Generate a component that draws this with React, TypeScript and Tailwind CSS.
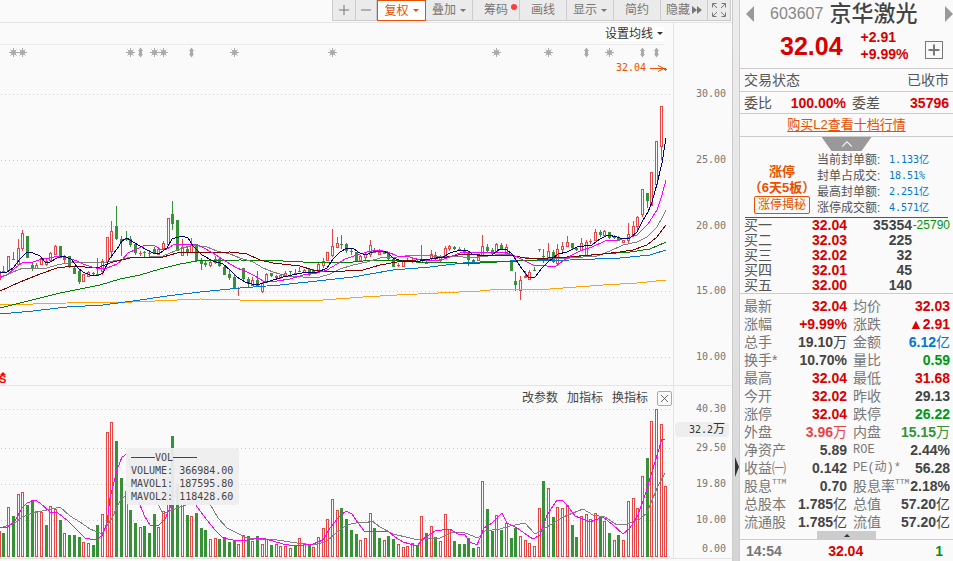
import { useState } from "react";
import type { ReactNode } from "react";
import { ChevronUp, Minus, Plus, X } from "lucide-react";

type Row = { label: ReactNode; value: string; unit?: string; color: string };

const RED = "#e64545";
const GREEN = "#379137";

const TEXT_RED = "text-[#d80000]";
const TEXT_GREEN = "text-[#009614]";
const TEXT_DARK = "text-[#444]";
const TEXT_BLUE = "text-[#0078d2]";

// direction, high, body top, body bottom, low
const CANDLES =
	"r266,271,272,272 r256,256,271,271 g252,259,260,260 r239,248,265,265 r230,233,249,251 g236,236,258,258 g263,265,268,271 r263,265,269,269 r257,258,265,265 r259,261,265,266 " +
	"r252,253,261,262 r245,246,255,255 g246,246,258,258 r255,258,260,263 g256,256,267,268 g266,268,274,274 g270,271,282,284 r274,274,282,282 r271,272,277,277 g272,273,274,276 " +
	"g258,274,275,275 r259,261,272,275 r237,237,262,262 r221,231,252,258 g206,226,239,240 g236,239,242,256 g231,238,240,241 g236,239,245,247 g243,244,253,255 r251,253,254,256 " +
	"g251,252,253,257 g250,253,254,257 g247,249,254,254 r247,249,255,255 r241,243,249,249 r218,218,245,246 g201,214,224,230 g220,220,251,251 r239,247,256,256 g247,249,252,256 " +
	"r238,244,253,253 g244,244,261,261 g258,260,264,270 g261,263,265,267 r261,262,266,267 r256,259,263,264 g258,259,266,267 g266,267,275,275 g270,274,278,280 g275,277,289,289 " +
	"r287,288,289,296 g268,268,279,281 g277,279,284,288 r277,280,286,286 g271,280,286,287 r282,283,292,293 r273,274,283,283 g273,273,276,277 r275,276,278,280 r274,275,278,279 " +
	"r271,273,276,276 g271,271,272,275 g269,273,275,275 g267,271,272,272 r269,270,273,273 g268,269,275,276 g269,270,274,274 r263,264,273,273 r258,261,266,268 r252,252,261,261 " +
	"r229,246,256,257 r237,243,248,248 g235,244,245,249 g243,244,251,253 g249,251,252,255 g252,252,262,262 r255,256,261,261 r253,254,258,260 r240,245,255,257 g248,250,253,253 " +
	"r249,252,255,255 g252,252,254,254 g253,253,259,260 g259,259,267,267 r263,265,266,267 r261,261,267,267 r258,260,262,262 r257,260,261,263 g260,261,263,263 r245,259,263,263 " +
	"g261,262,264,264 r250,254,259,260 g252,255,259,260 r255,256,261,262 r246,248,256,256 r245,246,249,251 g246,247,249,250 r247,249,250,250 g248,251,252,254 g252,253,260,266 " +
	"g259,260,263,263 r254,256,261,261 r235,246,256,256 g244,247,251,252 g248,250,254,256 r243,244,253,253 g243,245,249,250 r244,247,254,256 g260,261,271,271 g272,281,285,291 " +
	"r276,280,291,300 r271,276,278,278 r270,272,280,280 g267,270,271,271 r249,249,250,252 g249,256,257,263 r243,251,260,260 g250,252,262,263 r244,249,264,264 r242,246,250,252 " +
	"r236,242,247,247 g243,243,248,249 g247,248,250,251 r238,243,251,251 r240,242,256,256 r239,241,242,244 r229,232,241,241 g230,232,235,237 r230,231,236,236 g232,232,238,239 " +
	"g235,236,238,239 g236,237,241,241 r240,240,243,243 r223,234,241,243 r221,226,235,235 r216,217,227,230 r189,189,215,217 g193,193,201,208 r172,172,206,206 r141,141,185,185 " +
	"r106,106,147,160 r69,69,69,71";

const VOLUMES =
	"g533 r507 g516 r494 r492 g505 g500 r511 r512 g525 r506 r509 g520 r533 g535 g535 g537 r542 r543 g545 g525 r514 r432 r422 g441 g478 r491 g510 g523 r527 " +
	"g526 g533 g514 r527 r511 r477 g436 g484 r504 g515 r516 g513 g528 g530 r539 r538 g539 g537 g542 g540 r544 r535 g536 r541 g536 r544 r539 g545 r544 r546 " +
	"r546 r548 g545 r538 r543 g544 r547 r537 r528 r519 r499 r510 g508 g519 g530 g534 r540 r538 r513 g528 g538 r540 g536 g539 r544 r547 r546 r543 g545 r516 " +
	"g533 r526 g537 r541 r514 r529 g541 g544 g544 g538 g548 r547 r481 g509 g531 r515 g530 r523 g538 g528 r536 r540 r543 r546 r508 g481 r488 g517 r507 r508 " +
	"r505 g525 g537 r516 r514 r519 r513 g516 r521 g533 r540 g535 r540 r501 r498 r508 r476 g458 r421 r409 r424 r486";

const PRICE_LINES = [
	{ color: "#ffa500", points: "0,305 67,303 133,302 200,299 240,300 323,300 363,297 397,295 480,291 500,289 550,289 603,285 637,283 666,280" },
	{ color: "#0078d2", points: "0,314 33,311 67,307 103,305 133,301 167,296 200,292 240,288 280,285 317,281 353,277 393,270 430,267 463,263 480,262 510,261 570,260 620,258 650,255 666,250" },
	{ color: "#008000", points: "0,308 20,303 40,298 60,293 80,289 100,285 120,279 140,275 160,269 180,264 197,261 240,260 283,261 303,262 353,262 373,260 393,260 417,262 457,263 480,263 497,262 537,260 570,257 603,254 630,252 650,249 666,242" },
	{ color: "#808080", points: "0,278 13,272 23,268 47,268 57,265 73,262 107,262 120,260 130,257 150,257 163,256 170,253 180,249 193,245 207,247 217,251 230,254 240,258 253,262 263,268 273,272 287,276 303,277 320,277 330,274 340,269 353,265 367,262 380,258 397,257 413,255 433,256 463,257 480,257 503,254 520,257 537,259 570,258 597,256 610,251 623,245 637,242 647,237 657,227 662,218 666,210" },
	{ color: "#800000", points: "0,291 20,282 40,274 57,268 73,266 97,268 113,262 130,258 163,257 177,253 230,252 247,254 260,260 273,263 300,266 313,270 327,272 363,270 380,265 403,261 430,259 447,257 463,254 480,255 510,255 530,259 567,257 603,254 620,252 633,250 647,245 657,237 666,225" },
	{ color: "#ff00ff", points: "0,277 7,275 15,268 22,263 33,262 42,259 50,258 58,256 68,258 77,261 83,264 92,267 100,269 107,268 117,264 122,260 128,253 137,249 145,245 155,246 160,249 167,249 173,245 193,244 202,247 213,253 222,259 230,264 237,268 247,272 255,276 263,281 277,281 290,279 303,275 317,273 327,270 337,264 345,259 357,255 367,252 377,250 388,252 397,256 410,257 420,260 437,261 447,258 460,253 490,252 507,253 517,257 525,261 533,265 547,266 555,267 563,261 572,255 580,251 592,247 605,241 617,240 628,238 637,235 648,224 657,210 662,195 666,180" },
	{ color: "#000080", points: "0,273 7,272 13,268 20,259 27,252 33,253 40,256 45,262 50,262 57,258 63,256 71,259 78,268 83,272 90,275 97,276 103,273 110,258 117,249 122,241 127,238 133,242 140,246 147,250 153,253 160,253 167,248 172,239 182,236 188,238 193,246 202,255 213,261 223,264 230,270 237,277 245,282 252,284 260,284 270,281 283,277 297,274 307,272 318,272 327,268 333,259 340,252 347,248 353,248 358,252 365,255 373,252 383,251 388,253 393,258 402,261 410,262 420,261 430,259 443,257 450,253 460,250 467,250 472,254 483,256 492,255 500,249 507,250 512,254 520,266 528,277 535,277 542,268 548,262 558,254 567,252 577,247 592,245 600,239 608,235 617,237 623,239 630,238 637,232 643,220 648,212 652,202 657,184 662,163 666,138" },
];

const VOLUME_LINES = [
	{ color: "#808080", points: "0,528 15,523 22,517 33,513 47,510 60,507 70,516 80,522 90,529 102,534 112,518 120,501 128,493 135,489 150,488 163,514 180,507 197,501 210,504 218,518 227,528 247,538 257,539 277,540 297,543 315,545 327,541 337,532 347,525 360,522 365,523 372,521 380,527 393,534 410,538 418,540 430,538 440,538 453,532 465,533 478,538 485,531 500,529 510,526 525,523 535,534 547,527 563,517 583,509 593,515 605,517 617,525 627,524 640,519 647,513 657,488 665,473" },
	{ color: "#ff00ff", points: "0,528 8,527 15,521 22,508 27,503 35,500 40,503 50,512 58,513 68,521 78,531 85,538 95,540 102,536 107,523 110,498 117,470 122,457 127,454 133,478 140,505 145,517 150,525 158,526 165,519 170,508 177,488 192,487 197,507 207,520 215,530 223,538 233,540 247,540 262,538 273,541 283,544 295,546 313,544 323,540 330,528 338,518 346,511 352,514 358,523 365,532 388,531 395,537 403,542 417,546 423,539 435,531 450,529 458,534 465,535 470,542 477,545 482,533 484,528 492,523 502,513 507,523 517,528 527,535 533,539 540,535 547,515 557,500 562,500 567,505 575,516 590,522 603,517 613,525 623,534 630,528 638,515 645,495 652,472 662,439 665,439" },
];

const SUNS = [13, 22, 130, 154, 163, 234, 332, 496, 548, 609];
const DIAMONDS = [140, 191, 586, 642, 656];

const PRICE_TOP = 45;
const VOLUME_TOP = 386;
const VOLUME_BASE = 556;

const PRICE_TICKS = [
	{ label: "30.00", y: 94 },
	{ label: "25.00", y: 160 },
	{ label: "20.00", y: 226 },
	{ label: "15.00", y: 291 },
	{ label: "10.00", y: 357 },
];
const VOLUME_TICKS = [
	{ label: "40.30", y: 409 },
	{ label: "29.50", y: 448 },
	{ label: "19.80", y: 484 },
	{ label: "10.00", y: 520 },
	{ label: "0.00", y: 549 },
];

const barX = (i: number) => Math.floor(3.95 + 4.695 * i);

const SEAL_INFO = [
	["当前封单额:", "1.133亿"],
	["封单占成交:", "18.51%"],
	["最高封单额:", "2.251亿"],
	["涨停成交额:", "4.571亿"],
];

const BIDS = [
	{ name: "买一", price: "32.04", volume: "35354", diff: "-25790" },
	{ name: "买二", price: "32.03", volume: "225", diff: "" },
	{ name: "买三", price: "32.02", volume: "32", diff: "" },
	{ name: "买四", price: "32.01", volume: "45", diff: "" },
	{ name: "买五", price: "32.00", volume: "140", diff: "" },
];

const ttm = <span className="font-['Liberation_Mono'] text-[8px] leading-[10px]">TTM</span>;

const QUOTES: [Row, Row][] = [
	[{ label: "最新", value: "32.04", color: TEXT_RED }, { label: "均价", value: "32.03", color: TEXT_RED }],
	[{ label: "涨幅", value: "+9.99%", color: TEXT_RED }, { label: "涨跌", value: "▲2.91", color: TEXT_RED }],
	[{ label: "总手", value: "19.10", unit: "万", color: TEXT_DARK }, { label: "金额", value: "6.12", unit: "亿", color: TEXT_BLUE }],
	[{ label: "换手*", value: "10.70%", color: TEXT_DARK }, { label: "量比", value: "0.59", color: TEXT_GREEN }],
	[{ label: "最高", value: "32.04", color: TEXT_RED }, { label: "最低", value: "31.68", color: TEXT_RED }],
	[{ label: "今开", value: "32.02", color: TEXT_RED }, { label: "昨收", value: "29.13", color: TEXT_DARK }],
	[{ label: "涨停", value: "32.04", color: TEXT_RED }, { label: "跌停", value: "26.22", color: TEXT_GREEN }],
	[{ label: "外盘", value: "3.96", unit: "万", color: "text-[#e64545]" }, { label: "内盘", value: "15.15", unit: "万", color: "text-[#379137]" }],
	[{ label: "净资产", value: "5.89", color: TEXT_DARK }, { label: <span className="font-['Liberation_Mono'] text-xs leading-[18px]">ROE</span>, value: "2.44%", color: TEXT_DARK }],
	[
		{ label: "收益㈠", value: "0.142", color: TEXT_DARK },
		{ label: <span className="font-['Liberation_Mono','Noto_Sans_CJK_SC'] text-xs leading-[18px]">PE(动)*</span>, value: "56.28", color: TEXT_DARK },
	],
	[{ label: <>股息{ttm}</>, value: "0.70", color: TEXT_DARK }, { label: <>股息率{ttm}</>, value: "2.18%", color: TEXT_DARK }],
	[{ label: "总股本", value: "1.785", unit: "亿", color: TEXT_DARK }, { label: "总值", value: "57.20", unit: "亿", color: TEXT_DARK }],
	[{ label: "流通股", value: "1.785", unit: "亿", color: TEXT_DARK }, { label: "流值", value: "57.20", unit: "亿", color: TEXT_DARK }],
];

function Caret() {
	return <span className="ml-1 border-x-[3px] border-t-[3px] border-x-transparent border-t-current" />;
}

function Toolbar() {
	const [active, setActive] = useState("复权");
	const items = ["复权", "叠加", "筹码", "画线", "显示", "简约", "隐藏"];
	const base = "relative flex h-[21px] items-center justify-center border-b border-r border-[#ccc] bg-[#ebebeb]";

	return (
		<div className="flex h-[23px] justify-end border-b border-[#e4e4e4] pr-px text-xs text-[#777]">
			<button aria-label="放大" className={`${base} w-6 border-l`}><Plus size={16} strokeWidth={1.5} /></button>
			<button aria-label="缩小" className={`${base} w-[21px]`}><Minus size={16} strokeWidth={1.5} /></button>
			{items.map((item) => (
				<button
					key={item}
					onClick={() => setActive(item)}
					className={
						item === active
							? "flex h-[21px] w-[49px] items-center justify-center border border-[#e65000] bg-white text-[#e65000]"
							: `${base} w-[47px]`
					}
				>
					{item}
					{["复权", "叠加", "显示"].includes(item) && <Caret />}
					{item === "筹码" && <span className="absolute right-0.5 top-1 size-1.5 rounded-full bg-[#ff3c3c]" />}
					{item === "隐藏" && (
						<svg className="ml-0.5" width="10" height="8" fill="currentColor">
							<path d="M0 0l5 4-5 4zM5 0l5 4-5 4z" />
						</svg>
					)}
				</button>
			))}
			<button aria-label="全屏" className={`${base} w-[23px]`}>
				<svg width="14" height="14" fill="none" stroke="currentColor">
					<path d="M.5 4.500V.500H4.500M9.500 .500H13.500V4.500M13.500 9.500V13.500H9.500M4.500 13.500H.500V9.500M1 1L5 5M13 1L9 5M13 13L9 9M1 13L5 9" />
				</svg>
			</button>
		</div>
	);
}

function Grid({ ys }: { ys: number[] }) {
	return (
		<g stroke="#ccc" strokeDasharray="1 3" shapeRendering="crispEdges">
			{ys.map((y) => (
				<line key={y} x1="1" x2="672" y1={y + 0.5} y2={y + 0.5} />
			))}
		</g>
	);
}

function Lines({ lines }: { lines: { color: string; points: string }[] }) {
	return (
		<g fill="none" strokeWidth="1" shapeRendering="crispEdges">
			{lines.map((l) => (
				<polyline key={l.color} points={l.points} stroke={l.color} />
			))}
		</g>
	);
}

function PricePlot() {
	return (
		<svg className="block h-[340px] w-full" viewBox="0 45 673 340" preserveAspectRatio="none">
			<Grid ys={PRICE_TICKS.map((t) => t.y)} />
			<g shapeRendering="crispEdges">
				<rect x="-2" y="271" width="3" height="9" fill={RED} />
				{CANDLES.split(" ").map((c, i) => {
					const [high, top, bottom, low] = c.slice(1).split(",").map(Number);
					const x = barX(i);
					if (c[0] === "g") {
						return (
							<g key={i} fill={GREEN}>
								<rect x={x} y={high} width="1" height={Math.max(low - high, 1)} />
								<rect x={x - 1} y={top} width="3" height={bottom - top} />
							</g>
						);
					}
					return (
						<g key={i} fill={RED}>
							<rect x={x} y={high} width="1" height={top - high} />
							<rect x={x} y={bottom} width="1" height={low - bottom} />
							<rect x={x - 1} y={top} width="3" height={Math.max(bottom - top, 1)} />
							{bottom - top > 2 && <rect x={x} y={top + 1} width="1" height={bottom - top - 2} fill="#fafafa" />}
						</g>
					);
				})}
			</g>
			<Lines lines={PRICE_LINES} />
			<g stroke="#aaa" fill="#aaa">
				{SUNS.map((x) => (
					<g key={x}>
						<circle cx={x + 0.5} cy="52.5" r="2.500" stroke="none" />
						<path d={`M${x + 0.5} 48v9M${x - 4} 52.500h9M${x - 2.5} 49.500l6 6M${x + 3.5} 49.500l-6 6`} />
					</g>
				))}
				{DIAMONDS.map((x) => (
					<path key={x} stroke="none" d={`M${x + 0.5} 47.500l2.500 3.500h-1v3h1l-2.500 3.500l-2.500 -3.500h1v-3h-1z`} />
				))}
			</g>
			<text x="616" y="71" fill="#e65000" className="font-['DejaVu_Sans_Mono'] text-[10px]">32.04</text>
			<path d="M650 68.500h16M658 65.500l6 3l-6 3" fill="none" stroke="#e65000" />
			<text x="-1" y="383" fill="#f00" className="font-['Liberation_Sans'] text-[11px] font-bold">S</text>
			<path d="M0 375l3-3l3 3z" fill="#f00" />
		</svg>
	);
}

function VolumePlot() {
	return (
		<svg className="block h-[172px] w-full" viewBox="0 386 673 172" preserveAspectRatio="none">
			<Grid ys={[409, 448, 484, 520, 556]} />
			<g shapeRendering="crispEdges">
				<rect x="-2" y="531" width="3" height="26" fill={RED} />
				{VOLUMES.split(" ").map((v, i) => {
					const top = Number(v.slice(1));
					const x = barX(i);
					return v[0] === "g" ? (
						<rect key={i} x={x - 1} y={top} width="3" height={VOLUME_BASE + 1 - top} fill={GREEN} />
					) : (
						<rect key={i} x={x - 0.5} y={top + 0.5} width="2" height={VOLUME_BASE - top} fill="#fafafa" stroke={RED} />
					);
				})}
			</g>
			<Lines lines={VOLUME_LINES} />
		</svg>
	);
}

function Axis({ ticks, top }: { ticks: { label: string; y: number }[]; top: number }) {
	return (
		<>
			{ticks.map((t) => (
				<span key={t.label} className="absolute right-1.5 leading-3" style={{ top: t.y - top - 6 }}>
					{t.label}
				</span>
			))}
		</>
	);
}

function Chart() {
	return (
		<main className="flex min-w-0 flex-1 flex-col">
			<Toolbar />
			<section className="flex border-b border-[#e4e4e4]">
				<div className="min-w-0 flex-1">
					<div className="mr-[9px] flex h-[22px] items-center justify-end border-b border-[#ececec]">
						<button className="flex items-center bg-white px-px text-xs leading-[14px] text-[#333]">
							设置均线
							<Caret />
						</button>
					</div>
					<PricePlot />
				</div>
				<div className="relative w-[59px] border-l border-[#e4e4e4] font-['DejaVu_Sans_Mono'] text-[10px] text-[#777]">
					<Axis ticks={PRICE_TICKS} top={PRICE_TOP - 22} />
				</div>
			</section>
			<section className="flex border-b border-[#e4e4e4]">
				<div className="relative min-w-0 flex-1">
					<VolumePlot />
					<div className="absolute right-px top-1 flex items-center gap-[9px] text-xs leading-4 text-[#444]">
						<button>改参数</button>
						<button>加指标</button>
						<button>换指标</button>
						<button aria-label="关闭" className="flex size-[15px] items-center justify-center rounded-xs border border-[#aaa]">
							<X size={13} strokeWidth={1.5} />
						</button>
					</div>
					<div className="absolute left-[126px] top-[62px] flex h-[57px] w-[113px] flex-col whitespace-nowrap rounded-sm bg-[#eee]/95 px-[5px] py-[3px] font-['DejaVu_Sans_Mono'] text-[10px] leading-[13px] text-[#444]">
						<div className="flex w-[66px] items-center">
							<span className="h-px flex-1 bg-[#444]" />
							VOL
							<span className="h-px flex-1 bg-[#444]" />
						</div>
						<span>VOLUME: 366984.00</span>
						<span>MAVOL1: 187595.80</span>
						<span>MAVOL2: 118428.60</span>
					</div>
				</div>
				<div className="relative w-[59px] border-l border-[#e4e4e4] font-['DejaVu_Sans_Mono'] text-[10px] text-[#777]">
					<Axis ticks={VOLUME_TICKS} top={VOLUME_TOP} />
					<span className="absolute right-[3px] top-9 w-[54px] rounded-sm bg-[#eee] pr-1 text-right leading-[15px] text-[#333]">
						32.2<span className="font-['Noto_Sans_CJK_SC'] text-xs leading-none">万</span>
					</span>
				</div>
			</section>
		</main>
	);
}

function SidePanel() {
	return (
		<aside className="w-[213px] shrink-0 text-sm text-[#555]">
			<header className="flex h-7 items-center px-1.5">
				<button aria-label="上一只" className="border-y-8 border-r-8 border-y-transparent border-r-[#999]" />
				<h1 className="ml-4 flex flex-1 items-center gap-1.5 whitespace-nowrap">
					<span className="text-base text-[#888]">603607</span>
					<span className="text-[22px] font-medium leading-7 text-[#444]">京华激光</span>
				</h1>
				<button aria-label="下一只" className="-mr-1.5 border-y-8 border-l-8 border-y-transparent border-l-[#999]" />
			</header>
			<div className="flex h-[41px] items-center border-b border-[#ccc] pb-1 pl-10 pr-2.5 font-bold text-[#d80000]">
				<span className="text-[25px] leading-8">32.04</span>
				<div className="ml-[18px] flex-1 leading-[17px]">
					<div>+2.91</div>
					<div>+9.99%</div>
				</div>
				<button aria-label="加自选" className="mt-2 flex size-[18px] items-center justify-center border border-[#777] text-[#777]">
					<Plus size={16} strokeWidth={3} />
				</button>
			</div>
			<div className="flex h-[23px] items-center justify-between border-b border-[#ccc] px-1">
				<span>交易状态</span>
				<span>已收市</span>
			</div>
			<div className="flex h-[22px] items-center border-b border-[#ccc] px-1">
				<span>委比</span>
				<b className="flex-1 pr-1.5 text-right text-[#d80000]">100.00%</b>
				<span>委差</span>
				<b className="w-[69px] text-right text-[#d80000]">35796</b>
			</div>
			<div className="flex h-[23px] items-center justify-center border-b border-[#ccc] text-[13px]">
				<a href="#l2" className="text-[#e65000] underline underline-offset-2">购买L2查看十档行情</a>
			</div>

			<button aria-label="收起" className="mx-auto flex h-3.5 w-[50px] items-center justify-center bg-[#999] text-[#eee] [clip-path:polygon(0_0,100%_0,80%_100%,20%_100%)]">
				<ChevronUp size={18} strokeWidth={1.5} />
			</button>
			<div className="mx-[5px] flex h-[67px] border-b border-[#555] pl-1 text-xs leading-4">
				<div className="flex w-[66px] flex-col items-center pt-[13px] text-[13px] font-bold text-[#e65000]">
					<span>涨停</span>
					<span className="whitespace-nowrap">（6天5板）</span>
					<button className="h-[18px] w-14 rounded-xs border border-[#e65000] text-xs font-normal leading-4">涨停揭秘</button>
				</div>
				<dl className="pl-0.5 pt-px">
					{SEAL_INFO.map(([label, value]) => (
						<div key={label} className="flex">
							<dt className="w-[72px]">{label}</dt>
							<dd className="font-['DejaVu_Sans_Mono','Noto_Sans_CJK_SC'] text-[10px] text-[#0078d2]">{value}</dd>
						</div>
					))}
				</dl>
			</div>

			<table className="w-full table-fixed border-b border-[#ccc] leading-[15px]">
				<tbody>
					{BIDS.map((b) => (
						<tr key={b.name} className="h-[15px]">
							<td className="w-[50px] pl-1">{b.name}</td>
							<td className="w-[57px] text-right font-bold text-[#d80000]">{b.price}</td>
							<td className="w-[65px] text-right font-bold text-[#444]">{b.volume}</td>
							<td className="pr-[3px] text-right text-xs leading-[15px] text-[#009614]">{b.diff}</td>
						</tr>
					))}
				</tbody>
			</table>

			<table className="mt-[3px] w-full table-fixed leading-[18px] text-[#777]">
				<tbody>
					{QUOTES.map((pair, i) => (
						<tr key={i} className="h-[18px]">
							{pair.map((q, j) => (
								<td key={j} className={j === 0 ? "w-[107px] pl-1" : "pl-1.5 pr-[3px]"}>
									<div className="flex h-[18px] justify-between whitespace-nowrap">
										<span className="flex items-start">{q.label}</span>
										<span className={`font-bold ${q.color}`}>
											{q.value}
											{q.unit && <span className="font-normal">{q.unit}</span>}
										</span>
									</div>
								</td>
							))}
						</tr>
					))}
				</tbody>
			</table>
			<button aria-label="展开" className="mx-auto flex h-2 w-[59px] items-center justify-center bg-[#ccc]">
				<span className="border-x-[3px] border-b-[3px] border-x-transparent border-b-[#333]" />
			</button>
			<div className="flex h-[22px] items-center border-t border-[#ccc] pl-1.5 pr-2.5 font-bold">
				<span className="text-[#777]">14:54</span>
				<span className="flex-1 pr-[72px] text-right text-[#d80000]">32.04</span>
				<span className="text-[#009614]">1</span>
			</div>
		</aside>
	);
}

export default function App() {
	return (
		<div className="flex min-h-screen bg-[#fafafa] font-['Liberation_Sans','Noto_Sans_CJK_SC',sans-serif]">
			<Chart />
			<div className="flex w-2 shrink-0 flex-col items-end border-x border-[#ccc] bg-linear-to-b from-[#ededed] via-[#e4e4e4] to-[#d4d4d4] pt-[457px]">
				<button aria-label="折叠侧栏" className="border-y-[10px] border-l-4 border-y-transparent border-l-[#333]" />
			</div>
			<SidePanel />
		</div>
	);
}
